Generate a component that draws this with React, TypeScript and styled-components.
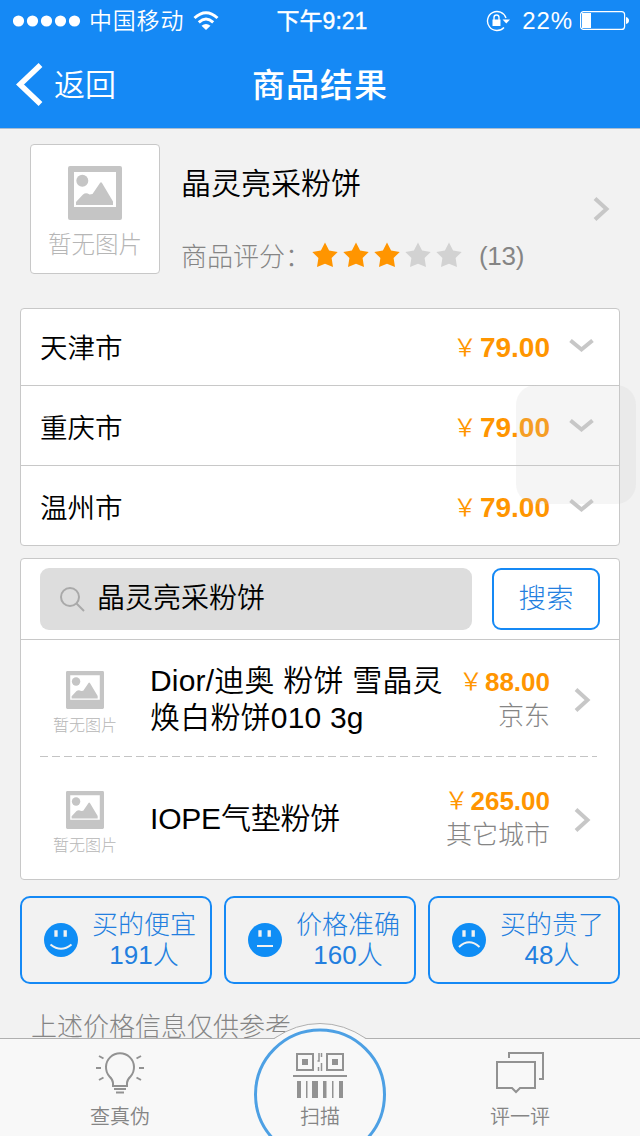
import React from 'react';
import styled, { createGlobalStyle } from 'styled-components';

const BLUE = '#1589f5';
const LINE = '#c8c8c8';
const GREY = '#858585';

const Global = createGlobalStyle`
  * { box-sizing: border-box; }
  body {
    margin: 0;
    background: #f2f2f2;
    color: #000;
    font-family: "Liberation Sans", "Noto Sans CJK SC", sans-serif;
    font-weight: 350;
  }
  svg { display: block; flex: none; }
`;

const Screen = styled.div`
  position: relative;
  width: 640px;
  height: 1136px;
  overflow: hidden;
  display: flex;
  flex-direction: column;
`;

const Header = styled.header`
  height: 129px;
  flex: none;
  background: ${BLUE};
  color: #fff;
  border-bottom: 1px solid #a9bdd2;
`;

const StatusBar = styled.div`
  height: 40px;
  display: grid;
  grid-template-columns: 1fr auto 1fr;
  align-items: center;
  padding: 1px 11px 0 13px;
`;

const StatusGroup = styled.div<{ $end?: boolean }>`
  display: flex;
  align-items: center;
  justify-content: ${(p) => (p.$end ? 'flex-end' : 'flex-start')};
`;

const Carrier = styled.span`
  font-size: 23px;
  line-height: 40px;
  letter-spacing: 0.8px;
  margin: 0 9px 0 8px;
`;

const Clock = styled.span`
  font-size: 23px;
  line-height: 40px;
  font-weight: 400;
  -webkit-text-stroke: 0.4px #fff;
  padding-left: 2px;
`;

const Percent = styled.span`
  font-size: 24px;
  line-height: 40px;
  letter-spacing: 0.9px;
  margin: 0 7px 0 12px;
`;

const NavBar = styled.div`
  height: 88px;
  display: grid;
  grid-template-columns: 1fr auto 1fr;
  align-items: center;
  padding: 0 16px;
`;

const Back = styled.div`
  display: flex;
  align-items: center;
  gap: 11px;
  font-size: 31px;
  line-height: 44px;
`;

const BackLabel = styled.span`
  padding-top: 4px;
`;

const Title = styled.h1`
  margin: 0;
  padding: 4px 0 0 0;
  font-size: 33px;
  line-height: 44px;
  font-weight: 500;
  letter-spacing: 1px;
`;

const Product = styled.section`
  height: 179px;
  flex: none;
  display: flex;
  padding: 15px 30px 0;
`;

const Thumb = styled.div<{ $framed?: boolean }>`
  flex: none;
  display: flex;
  flex-direction: column;
  align-items: center;
  color: #b6b6b6;
  font-weight: 300;
  white-space: nowrap;
  width: ${(p) => (p.$framed ? 130 : 70)}px;
  height: ${(p) => (p.$framed ? '130px' : 'auto')};
  padding-top: ${(p) => (p.$framed ? 21 : 14)}px;
  font-size: ${(p) => (p.$framed ? 23.5 : 16)}px;
  line-height: ${(p) => (p.$framed ? 50 : 34)}px;
  background: #fff;
  border: ${(p) => (p.$framed ? `1px solid ${LINE}` : 'none')};
  border-radius: 4px;
`;

const ProductInfo = styled.div`
  flex: 1;
  padding-left: 21px;
`;

const ProductName = styled.div`
  font-size: 30px;
  line-height: 46px;
  padding-top: 17px;
`;

const Rating = styled.div`
  display: flex;
  align-items: center;
  margin-top: 26px;
  height: 44px;
  font-size: 26px;
  line-height: 44px;
  color: ${GREY};
  font-weight: 300;
`;

const RatingLabel = styled.span`
  width: 131px;
  padding-top: 3px;
`;

const Stars = styled.div`
  display: flex;
  gap: 5px;
  margin-right: 17px;
`;

const RatingCount = styled.span`
  padding-top: 2px;
  letter-spacing: -0.3px;
`;

const ArrowSlot = styled.div`
  padding-top: 53px;
`;

const Card = styled.section<{ $gap?: number }>`
  flex: none;
  margin: ${(p) => p.$gap ?? 0}px 20px 0;
  background: #fff;
  border: 1px solid ${LINE};
  border-radius: 4px;
`;

const CityRow = styled.div`
  height: 80px;
  display: flex;
  align-items: center;
  padding: 3px 25px 0 19px;
  font-size: 27.5px;
  border-bottom: 1px solid ${LINE};
  &:first-child { height: 77px; padding-top: 0; }
  &:last-child { height: 79px; border-bottom: 0; padding-top: 3px; }
`;

const CityName = styled.span`
  flex: 1;
  line-height: 40px;
  padding-top: 4px;
`;

const Price = styled.span<{ $size: number }>`
  display: flex;
  align-items: center;
  justify-content: flex-end;
  color: #ff9500;
  font-size: ${(p) => p.$size}px;
  line-height: 34px;
  font-weight: 700;
`;

const Yen = styled.span<{ $gap: number }>`
  font-weight: 350;
  font-size: 24px;
  height: 34px;
  margin-right: ${(p) => p.$gap}px;
`;

const ChevronDown = styled.div`
  padding: 0 0 2px 19px;
`;

const CityPrice = styled.div`
  padding-top: 2px;
`;

const SearchBar = styled.div`
  height: 81px;
  display: flex;
  gap: 20px;
  padding: 9px 19px 0;
  border-bottom: 1px solid ${LINE};
`;

const SearchField = styled.div`
  width: 432px;
  height: 62px;
  display: flex;
  align-items: center;
  gap: 12px;
  padding-left: 20px;
  background: #ddd;
  border-radius: 9px;
  font-size: 28px;
  line-height: 58px;
`;

const SearchText = styled.span`
  padding-bottom: 1px;
`;

const SearchButton = styled.button`
  width: 108px;
  height: 62px;
  padding: 0 0 6px;
  background: #fff;
  border: 2px solid ${BLUE};
  border-radius: 9px;
  color: #237fdf;
  font: inherit;
  font-weight: 300;
  font-size: 27.5px;
`;

const OfferRow = styled.div`
  height: 116px;
  display: flex;
  align-items: center;
  padding: 4px 28px 0 29px;
  &:last-child { height: 122px; padding-top: 3px; }
`;

const OfferName = styled.div<{ $spacing: number }>`
  width: 300px;
  margin: -2px 0 0 30px;
  font-size: 30px;
  letter-spacing: ${(p) => p.$spacing}px;
  line-height: 37px;
  white-space: pre-line;
`;

const OfferSide = styled.div`
  flex: 1;
  margin: -2px 0 0 -14px;
  text-align: right;
  font-size: 26px;
  font-weight: 300;
  line-height: 35px;
  color: ${GREY};
  white-space: nowrap;
`;

const OfferArrow = styled.div`
  margin-left: 24px;
`;

const DashLine = styled.div`
  height: 1px;
  margin: 0 22px 0 19px;
  background: repeating-linear-gradient(90deg, #c4c4c4 0 8px, transparent 8px 12px);
`;

const Votes = styled.section`
  flex: none;
  display: flex;
  gap: 12px;
  margin: 16px 20px 0;
`;

const VoteButton = styled.button`
  width: 192px;
  height: 88px;
  display: flex;
  align-items: center;
  gap: 14px;
  padding: 0 0 0 22px;
  background: transparent;
  border: 2px solid ${BLUE};
  border-radius: 10px;
  color: #237fdf;
  font: inherit;
  font-weight: 300;
  font-size: 26px;
  line-height: 30px;
  text-align: center;
  white-space: nowrap;
`;

const VoteText = styled.span`
  display: flex;
  flex-direction: column;
`;

const Note = styled.p`
  flex: none;
  margin: 23px 0 0 31px;
  font-size: 26px;
  font-weight: 300;
  line-height: 40px;
  color: ${GREY};
`;

const TabBar = styled.nav`
  position: absolute;
  left: 0;
  bottom: 0;
  width: 640px;
  height: 98px;
  display: grid;
  grid-template-columns: 240px 160px 240px;
  background: #f8f8f8;
  border-top: 1px solid #b0b0b0;
`;

const Tab = styled.div`
  position: relative;
  display: flex;
  flex-direction: column;
  align-items: center;
  gap: 7px;
  padding-top: 13px;
  font-size: 20px;
  line-height: 32px;
  color: ${GREY};
`;

const ScanRing = styled.svg`
  position: absolute;
  left: 0;
  top: -17px;
`;

const TabContent = styled.div`
  position: relative;
  display: flex;
  flex-direction: column;
  align-items: center;
  gap: 2px;
`;

const AssistTouch = styled.div`
  position: absolute;
  left: 516px;
  top: 385px;
  width: 120px;
  height: 119px;
  border-radius: 20px;
  background: rgba(200, 200, 200, 0.18);
`;

const Placeholder = ({ size }: { size: number }) => (
  <svg width={size} height={size} viewBox="0 0 54 54" fill="#c5c5c5">
    <path fillRule="evenodd" d="M2 0H52Q54 0 54 2V52Q54 54 52 54H2Q0 54 0 52V2Q0 0 2 0ZM6 6V41H48V6Z" />
    <circle cx="14.3" cy="14.8" r="6" />
    <path d="M8 39V36L15 28.500Q18 26 21.500 28.500L24.500 28L32 17Q33 15.500 34 17L45 35.500V39Z" />
  </svg>
);

const Arrow = () => (
  <svg width="17" height="24" viewBox="0 0 17 24" fill="none" stroke="#c7c7c7" strokeWidth="4">
    <path d="M2 1.500L13.500 12L2 22.500" />
  </svg>
);

const Down = () => (
  <svg width="25" height="14" viewBox="0 0 25 14" fill="none" stroke="#c7c7c7" strokeWidth="4">
    <path d="M1.500 1.500L12.500 10.500L23.500 1.500" />
  </svg>
);

const Star = ({ on }: { on: boolean }) => (
  <svg width="26" height="26" viewBox="0 0 26 26" fill={on ? '#ff9500' : '#d2d2d2'}>
    <path d="M13 .5L17.100 8.500L25.700 9.900L19.600 16.100L21 25L13 21.700L5 25L6.400 16.100L.3 9.900L8.900 8.500Z" />
  </svg>
);

const mouths: Record<string, string> = {
  happy: 'M6.500 21.500Q17 30 27.500 21.500',
  flat: 'M9 23H25',
  sad: 'M7 24Q17 14.500 27.500 24',
};

const Face = ({ mood }: { mood: string }) => (
  <svg width="34" height="34" viewBox="0 0 34 34">
    <circle cx="17" cy="17" r="17" fill="#0f8df5" />
    <path d="M12 7.300V13.700M21.200 7.300V13.700" stroke="#f2f2f2" strokeWidth="3.300" />
    <path d={mouths[mood]} stroke="#f2f2f2" strokeWidth="2" fill="none" />
  </svg>
);

const PriceTag = ({ value, size, gap }: { value: string; size: number; gap: number }) => (
  <Price $size={size}><Yen $gap={gap}>{'\uFFE5'}</Yen>{value}</Price>
);

const cities = ['天津市', '重庆市', '温州市'];

const votes = [
  { mood: 'happy', label: '买的便宜', count: '191人' },
  { mood: 'flat', label: '价格准确', count: '160人' },
  { mood: 'sad', label: '买的贵了', count: '48人' },
];

export default function App() {
  return (
    <Screen>
      <Global />
      <Header>
        <StatusBar>
          <StatusGroup>
            <svg width="68" height="12" fill="#fff">
              {[5.5, 19.5, 33.5, 47.5, 61.5].map((x) => <circle key={x} cx={x} cy="6" r="5.600" />)}
            </svg>
            <Carrier>中国移动</Carrier>
            <svg width="26" height="20" viewBox="0 0 26 20" fill="none" stroke="#fff" strokeWidth="3">
              <path d="M1.500 7Q13-3.500 24.500 7M5.800 11.300Q13 4.800 20.200 11.300" />
              <path d="M13 19L8.500 14.800Q13 11 17.500 14.800Z" fill="#fff" stroke="none" />
            </svg>
          </StatusGroup>
          <Clock>下午9:21</Clock>
          <StatusGroup $end>
            <svg width="24" height="22" viewBox="0 0 24 22" fill="none" stroke="#fff" strokeWidth="1.400">
              <path d="M20 8A9.500 9.500 0 1 0 18 17.500" />
              <path d="M16.500 9.500H24L20.300 13.500Z" fill="#fff" stroke="none" />
              <path d="M6.500 9.500H14.500V16H6.500Z" fill="#fff" stroke="none" />
              <path d="M8 10V7.500Q8 5 10.500 5T13 7.500V10" />
            </svg>
            <Percent>22%</Percent>
            <svg width="49" height="21" viewBox="0 0 49 21">
              <rect x=".6" y=".6" width="44" height="17.800" rx="3" fill="none" stroke="#fff" strokeWidth="1.200" />
              <rect x="2" y="2" width="9" height="15" fill="#fff" />
              <path d="M46 6Q49 7 49 9.500T46 13Z" fill="#fff" />
            </svg>
          </StatusGroup>
        </StatusBar>
        <NavBar>
          <Back>
            <svg width="27" height="43" viewBox="0 0 27 43" fill="none" stroke="#fff" strokeWidth="5.500">
              <path d="M24.500 2L4 21.500L24.500 41" />
            </svg>
            <BackLabel>返回</BackLabel>
          </Back>
          <Title>商品结果</Title>
        </NavBar>
      </Header>

      <Product>
        <Thumb $framed><Placeholder size={54} />暂无图片</Thumb>
        <ProductInfo>
          <ProductName>晶灵亮采粉饼</ProductName>
          <Rating>
            <RatingLabel>商品评分：</RatingLabel>
            <Stars>{[1, 2, 3, 4, 5].map((n) => <Star key={n} on={n <= 3} />)}</Stars>
            <RatingCount>(13)</RatingCount>
          </Rating>
        </ProductInfo>
        <ArrowSlot><Arrow /></ArrowSlot>
      </Product>

      <Card>
        {cities.map((c) => (
          <CityRow key={c}>
            <CityName>{c}</CityName>
            <CityPrice><PriceTag value="79.00" size={28} gap={3} /></CityPrice>
            <ChevronDown><Down /></ChevronDown>
          </CityRow>
        ))}
      </Card>

      <Card $gap={12}>
        <SearchBar>
          <SearchField>
            <svg width="25" height="25" viewBox="0 0 25 25" fill="none" stroke="#a9a9a9" strokeWidth="2">
              <circle cx="10" cy="10" r="9" />
              <path d="M16.500 16.500L24 24" />
            </svg>
            <SearchText>晶灵亮采粉饼</SearchText>
          </SearchField>
          <SearchButton>搜索</SearchButton>
        </SearchBar>
        <OfferRow>
          <Thumb><Placeholder size={38} />暂无图片</Thumb>
          <OfferName $spacing={0.2}>{'Dior/迪奥 粉饼 雪晶灵\n焕白粉饼010 3g'}</OfferName>
          <OfferSide><PriceTag value="88.00" size={26} gap={2} />京东</OfferSide>
          <OfferArrow><Arrow /></OfferArrow>
        </OfferRow>
        <DashLine />
        <OfferRow>
          <Thumb><Placeholder size={38} />暂无图片</Thumb>
          <OfferName $spacing={-0.2}>IOPE气垫粉饼</OfferName>
          <OfferSide><PriceTag value="265.00" size={26} gap={2} />其它城市</OfferSide>
          <OfferArrow><Arrow /></OfferArrow>
        </OfferRow>
      </Card>

      <Votes>
        {votes.map((v) => (
          <VoteButton key={v.mood}>
            <Face mood={v.mood} />
            <VoteText><span>{v.label}</span><span>{v.count}</span></VoteText>
          </VoteButton>
        ))}
      </Votes>

      <Note>上述价格信息仅供参考</Note>

      <TabBar>
        <Tab>
          <svg width="48" height="42" viewBox="0 0 48 42" fill="none" stroke="#929292" strokeWidth="2">
            <path d="M17 34V31Q17 28 13.500 24.500A14 14 0 1 1 34.500 24.500Q31 28 31 31V34ZM18 37H30M20 40.500H28" />
            <path d="M0 16H5M43 16H48M3 4L7.500 6.500M45 4L40.500 6.500M3 28L7.500 25.500M45 28L40.500 25.500" />
          </svg>
          查真伪
        </Tab>
        <Tab>
          <ScanRing width="160" height="115" viewBox="0 0 160 115">
            <path d="M34 17Q56 1.500 80 1.500T126 17V115H34Z" fill="#f8f8f8" />
            <path d="M34 16.500Q56 1.500 80 1.500T126 16.500" fill="none" stroke="#b0b0b0" />
            <circle cx="80" cy="72.500" r="64.500" fill="#f8f8f8" stroke="#4da0e4" strokeWidth="3" />
          </ScanRing>
          <TabContent>
            <svg width="54" height="47" viewBox="0 0 54 47" fill="none" stroke="#929292" strokeWidth="2">
              <path d="M4 2H20V18H4ZM34 2H50V18H34Z" />
              <path d="M26 1V9H24.500M28.500 1V5M28.500 11V19M25.500 15V19" strokeWidth="1.500" />
              <path d="M9 7H15V13H9ZM39 7H45V13H39Z" fill="#929292" stroke="none" />
              <path d="M0 24H54" />
              <path d="M4 29H8V46H4ZM13 29H14.500V46H13ZM19 29H25V46H19ZM30 29H33.500V46H30ZM39 29H40.500V46H39ZM46 29H50V46H46Z" fill="#929292" stroke="none" />
            </svg>
            扫描
          </TabContent>
        </Tab>
        <Tab>
          <svg width="48" height="42" viewBox="0 0 48 42" fill="none" stroke="#929292" strokeWidth="2">
            <path d="M13 6V1H47V27H43" />
            <path d="M1 10H39V36H24L20 40L16 36H1Z" />
          </svg>
          评一评
        </Tab>
      </TabBar>
      <AssistTouch />
    </Screen>
  );
}
